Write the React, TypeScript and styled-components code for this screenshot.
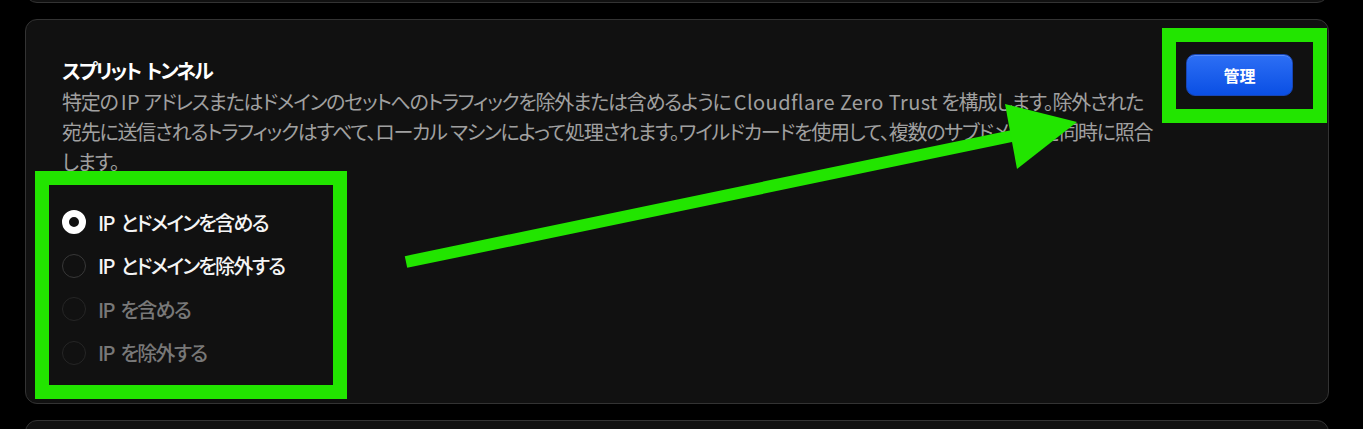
import React from "react";
import styled, { createGlobalStyle, css } from "styled-components";

const GlobalStyle = createGlobalStyle`
  html, body { margin: 0; padding: 0; background: #000; }
  body {
    font-family: "Noto Sans CJK JP", "Noto Sans", sans-serif;
    font-feature-settings: "palt";
    overflow: hidden;
  }
`;

const Page = styled.div`
  position: relative;
  width: 1363px;
  height: 429px;
  overflow: hidden;
  box-sizing: border-box;
  padding: 0 34px 0 25px;
  display: flex;
  flex-direction: column;
  gap: 16px;
`;

const Card = styled.section<{ $peek?: "top" | "bottom" }>`
  flex-shrink: 0;
  background: #111111;
  border: 1px solid #333333;
  border-radius: 12px;
  box-sizing: border-box;
  ${(p) =>
    p.$peek === "top" &&
    css`
      height: 40px;
      margin-top: -37px;
    `}
  ${(p) =>
    p.$peek === "bottom" &&
    css`
      height: 60px;
    `}
  ${(p) =>
    !p.$peek &&
    css`
      padding: 35px 35px 38.5px 36px;
    `}
`;

const Header = styled.div`
  display: flex;
  align-items: flex-start;
  gap: 24px;
`;

const TextBlock = styled.div`
  flex: 1;
  min-width: 0;
`;

const Title = styled.h2`
  margin: 0;
  font-size: 20px;
  line-height: 32px;
  font-weight: 700;
  letter-spacing: -2px;
  word-spacing: 3px;
  color: #ffffff;
`;

const Description = styled.p`
  margin: 0;
  font-size: 20px;
  line-height: 30px;
  font-weight: 400;
  letter-spacing: -1.24px;
  white-space: nowrap;
  color: #a0a0a0;
`;

const Latin = styled.span`
  letter-spacing: 0.4px;
`;

const ManageButton = styled.button`
  flex-shrink: 0;
  margin-top: -1px;
  width: 107px;
  height: 42px;
  border-radius: 9px;
  border: 1px solid #1745b5;
  background: linear-gradient(#2d6ff5, #0a4fe4);
  box-shadow: inset 0 1px 0 rgba(255, 255, 255, 0.22);
  color: #ffffff;
  font-family: "Noto Sans CJK JP", sans-serif;
  font-size: 16px;
  font-weight: 700;
  cursor: pointer;
`;

const RadioList = styled.div`
  margin-top: 33px;
  display: flex;
  flex-direction: column;
  gap: 19.5px;
`;

const RadioRow = styled.label<{ $disabled?: boolean }>`
  display: flex;
  align-items: center;
  gap: 12px;
  height: 24px;
  font-size: 20px;
  font-weight: 500;
  letter-spacing: -1.7px;
  word-spacing: 4px;
  color: ${(p) => (p.$disabled ? "#787878" : "#f5f5f5")};
  cursor: ${(p) => (p.$disabled ? "default" : "pointer")};
`;

const RadioDot = styled.span<{ $checked?: boolean; $disabled?: boolean }>`
  width: 24px;
  height: 24px;
  box-sizing: border-box;
  border-radius: 50%;
  flex-shrink: 0;
  background: #111111;
  border: ${(p) =>
    p.$checked
      ? "7px solid #ffffff"
      : p.$disabled
      ? "1.5px solid #262626"
      : "1.5px solid #383838"};
`;

const Overlay = styled.svg`
  position: absolute;
  left: 0;
  top: 0;
  pointer-events: none;
`;

const GREEN = "#22e500";

const options = [
  { label: "IP とドメインを含める", checked: true, disabled: false },
  { label: "IP とドメインを除外する", checked: false, disabled: false },
  { label: "IP を含める", checked: false, disabled: true },
  { label: "IP を除外する", checked: false, disabled: true },
];

export default function App() {
  return (
    <>
      <GlobalStyle />
      <Page>
        <Card $peek="top" />
        <Card>
          <Header>
            <TextBlock>
              <Title>スプリット トンネル</Title>
              <Description>
                特定の <Latin>IP</Latin> アドレスまたはドメインのセットへのトラフィックを除外または含めるように{" "}
                <Latin>Cloudflare Zero Trust</Latin> を構成します。除外された
                <br />
                宛先に送信されるトラフィックはすべて、ローカル マシンによって処理されます。ワイルドカードを使用して、複数のサブドメインを同時に照合
                <br />
                します。
              </Description>
            </TextBlock>
            <ManageButton>管理</ManageButton>
          </Header>
          <RadioList>
            {options.map((o) => (
              <RadioRow key={o.label} $disabled={o.disabled}>
                <RadioDot $checked={o.checked} $disabled={o.disabled} />
                {o.label}
              </RadioRow>
            ))}
          </RadioList>
        </Card>
        <Card $peek="bottom" />
        <Overlay width="1363" height="429" viewBox="0 0 1363 429">
          <rect x="42" y="178" width="298" height="214" fill="none" stroke={GREEN} strokeWidth="14" />
          <rect x="1169" y="35" width="151" height="81" fill="none" stroke={GREEN} strokeWidth="14" />
          <line x1="406" y1="262" x2="1012" y2="136" stroke={GREEN} strokeWidth="12" />
          <polygon points="1005,104 1077,122 1017,169" fill={GREEN} />
        </Overlay>
      </Page>
    </>
  );
}
